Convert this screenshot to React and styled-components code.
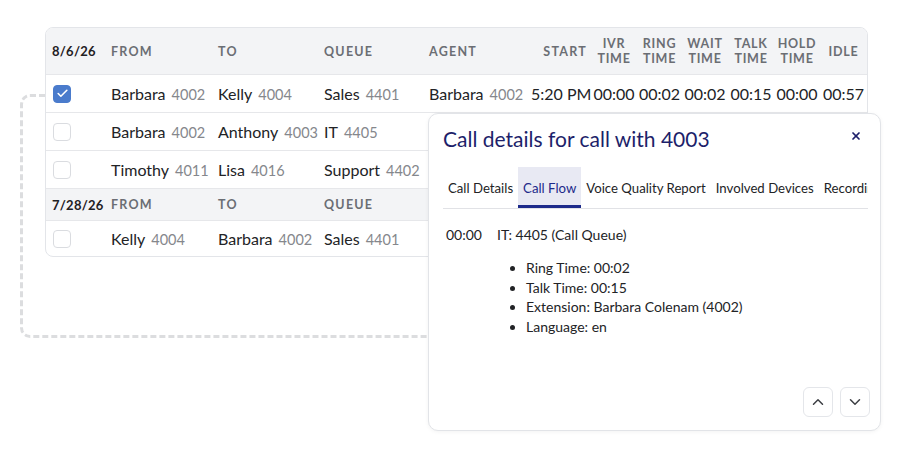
import React from 'react';
import styled, { createGlobalStyle } from 'styled-components';
import { Check, X, ChevronUp, ChevronDown } from 'lucide-react';

const GlobalStyle = createGlobalStyle`
    body {
        margin: 0;
        background: #ffffff;
        font-family: Lato, "Noto Sans", sans-serif;
        color: #222326;
    }
`;

const Stage = styled.div`
    position: relative;
    width: 900px;
    height: 450px;
    padding: 27px 0 0 45px;
    box-sizing: border-box;
    overflow: hidden;
`;

// dashed connector drawn behind the table and the dialog
const Connector = styled.div`
    position: absolute;
    left: 20px;
    top: 94px;
    width: 430px;
    height: 244px;
    box-sizing: border-box;
    border: 3px dashed #dcdddf;
    border-radius: 10px;
    z-index: 0;
`;

const TableCard = styled.div`
    position: relative;
    z-index: 1;
    width: 821px;
    background: #fff;
    border: 1px solid #e3e5e9;
    border-radius: 8px;
    overflow: hidden;
`;

const cols = '59px 107px 106px 105px 104px 64px 46px 45px 46px 46px 46px 47px';

const HeadRow = styled.div`
    display: grid;
    grid-template-columns: ${cols};
    align-items: center;
    height: ${p => (p.$compact ? '31px' : '46px')};
    background: #f3f4f6;
    border-bottom: 1px solid #e6e7ea;
`;

const HeadCell = styled.div`
    padding: 0 ${p => (p.$right ? '4px' : '6px')};
    font-size: 12.5px;
    font-weight: 700;
    letter-spacing: 0.1em;
    line-height: 15px;
    color: #6b6e74;
    text-transform: uppercase;
    text-align: ${p => (p.$center ? 'center' : p.$right ? 'right' : 'left')};
    ${p => p.$center && 'padding: 0; letter-spacing: 0.06em;'}
`;

const DateCell = styled.div`
    padding-left: 6px;
    font-size: 13px;
    font-weight: 700;
    letter-spacing: 0.02em;
    color: #1f2023;
`;

const Row = styled.div`
    display: grid;
    grid-template-columns: ${cols};
    align-items: center;
    height: ${p => p.$h || 37}px;
    border-bottom: ${p => (p.$last ? 'none' : '1px solid #e6e7ea')};
`;

const Cell = styled.div`
    padding: 0 ${p => (p.$right ? '4px' : '6px')};
    font-size: 16px;
    white-space: nowrap;
    text-align: ${p => (p.$center ? 'center' : p.$right ? 'right' : 'left')};
    ${p => p.$center && 'padding: 0;'}
`;

const Ext = styled.span`
    margin-left: 6px;
    font-size: 14.5px;
    color: #85878c;
`;

const Box = styled.div`
    margin-left: 7px;
    width: 18px;
    height: 18px;
    box-sizing: border-box;
    border-radius: 4px;
    border: 1px solid ${p => (p.$checked ? '#4a7bcc' : '#dadce0')};
    background: ${p => (p.$checked ? '#4a7bcc' : '#fff')};
    display: flex;
    align-items: center;
    justify-content: center;
    color: #fff;
`;

const Dialog = styled.div`
    position: absolute;
    z-index: 2;
    left: 428px;
    top: 113px;
    width: 453px;
    height: 318px;
    box-sizing: border-box;
    background: #fff;
    border: 1px solid #e2e4e8;
    border-radius: 10px;
    box-shadow: 0 1px 4px rgba(0, 0, 0, 0.05);
    padding: 9px 12px 14px 14px;
    display: flex;
    flex-direction: column;
`;

const TitleBar = styled.div`
    display: flex;
    align-items: center;
    justify-content: space-between;
    height: 30px;
    padding-right: 6px;
`;

const Title = styled.h2`
    margin: 0;
    font-size: 21px;
    font-weight: 400;
    color: #1d1f6a;
`;

const CloseBtn = styled.button`
    border: none;
    background: none;
    padding: 0;
    margin-top: -5px;
    display: flex;
    color: #1d1f6a;
    cursor: pointer;
`;

const Tabs = styled.div`
    display: flex;
    margin-top: 14px;
    height: 41px;
    border-bottom: 1px solid #e1e2e6;
    overflow: hidden;
    white-space: nowrap;
`;

const Tab = styled.div`
    padding: 3px 5px 0;
    display: flex;
    align-items: center;
    font-size: 13.2px;
    color: ${p => (p.$active ? '#1d2a8a' : '#222326')};
    background: ${p => (p.$active ? '#e8e9f3' : 'transparent')};
    border-bottom: 3px solid ${p => (p.$active ? '#1d2a8a' : 'transparent')};
    flex-shrink: 0;
`;

const Flow = styled.div`
    flex: 1;
    padding: 17px 0 0 3px;
    font-size: 14px;
    color: #222326;
`;

const Step = styled.div`
    display: flex;
    gap: 15px;
`;

const List = styled.ul`
    margin: 15px 0 0;
    padding-left: 80px;
    line-height: 19.5px;
`;

const Nav = styled.div`
    display: flex;
    justify-content: flex-end;
    gap: 7px;
    margin-right: -2px;
    margin-bottom: -1px;
`;

const NavBtn = styled.button`
    width: 30px;
    height: 30px;
    box-sizing: border-box;
    border: 1px solid #e4e6ea;
    border-radius: 6px;
    background: #fff;
    display: flex;
    align-items: center;
    justify-content: center;
    color: #3d3f44;
    padding: 0;
`;

const times = ['IVR', 'Ring', 'Wait', 'Talk', 'Hold'];

const Person = ({ name, ext }) => (
    <Cell>
        {name}
        <Ext>{ext}</Ext>
    </Cell>
);

const rows = [
    { checked: true, from: ['Barbara', '4002'], to: ['Kelly', '4004'], queue: ['Sales', '4401'], agent: ['Barbara', '4002'], start: '5:20 PM', vals: ['00:00', '00:02', '00:02', '00:15', '00:00', '00:57'] },
    { from: ['Barbara', '4002'], to: ['Anthony', '4003'], queue: ['IT', '4405'] },
    { from: ['Timothy', '4011'], to: ['Lisa', '4016'], queue: ['Support', '4402'] },
];

const CallRow = ({ r, h, last }) => (
    <Row $h={h} $last={last}>
        <Box $checked={r.checked}>{r.checked && <Check size={13} strokeWidth={3} />}</Box>
        <Person name={r.from[0]} ext={r.from[1]} />
        <Person name={r.to[0]} ext={r.to[1]} />
        <Person name={r.queue[0]} ext={r.queue[1]} />
        {r.agent ? <Person name={r.agent[0]} ext={r.agent[1]} /> : <Cell />}
        <Cell $right>{r.start}</Cell>
        {(r.vals || []).map((v, i) => (
            <Cell key={i} $center>{v}</Cell>
        ))}
    </Row>
);

const App = () => (
    <Stage>
        <GlobalStyle />
        <Connector />
        <TableCard>
            <HeadRow>
                <DateCell>8/6/26</DateCell>
                <HeadCell>From</HeadCell>
                <HeadCell>To</HeadCell>
                <HeadCell>Queue</HeadCell>
                <HeadCell>Agent</HeadCell>
                <HeadCell $right>Start</HeadCell>
                {times.map(t => (
                    <HeadCell key={t} $center>{t}<br />Time</HeadCell>
                ))}
                <HeadCell $center>Idle</HeadCell>
            </HeadRow>
            {rows.map((r, i) => (
                <CallRow key={i} r={r} />
            ))}
            <HeadRow $compact>
                <DateCell>7/28/26</DateCell>
                <HeadCell>From</HeadCell>
                <HeadCell>To</HeadCell>
                <HeadCell>Queue</HeadCell>
            </HeadRow>
            <CallRow r={{ from: ['Kelly', '4004'], to: ['Barbara', '4002'], queue: ['Sales', '4401'] }} h={35} last />
        </TableCard>

        <Dialog>
            <TitleBar>
                <Title>Call details for call with 4003</Title>
                <CloseBtn><X size={12} strokeWidth={3.5} /></CloseBtn>
            </TitleBar>
            <Tabs>
                <Tab>Call Details</Tab>
                <Tab $active>Call Flow</Tab>
                <Tab>Voice Quality Report</Tab>
                <Tab>Involved Devices</Tab>
                <Tab>Recordings</Tab>
            </Tabs>
            <Flow>
                <Step>
                    <span>00:00</span>
                    <span>IT: 4405 (Call Queue)</span>
                </Step>
                <List>
                    <li>Ring Time: 00:02</li>
                    <li>Talk Time: 00:15</li>
                    <li>Extension: Barbara Colenam (4002)</li>
                    <li>Language: en</li>
                </List>
            </Flow>
            <Nav>
                <NavBtn><ChevronUp size={18} strokeWidth={2} /></NavBtn>
                <NavBtn><ChevronDown size={18} strokeWidth={2} /></NavBtn>
            </Nav>
        </Dialog>
    </Stage>
);

export default App;
